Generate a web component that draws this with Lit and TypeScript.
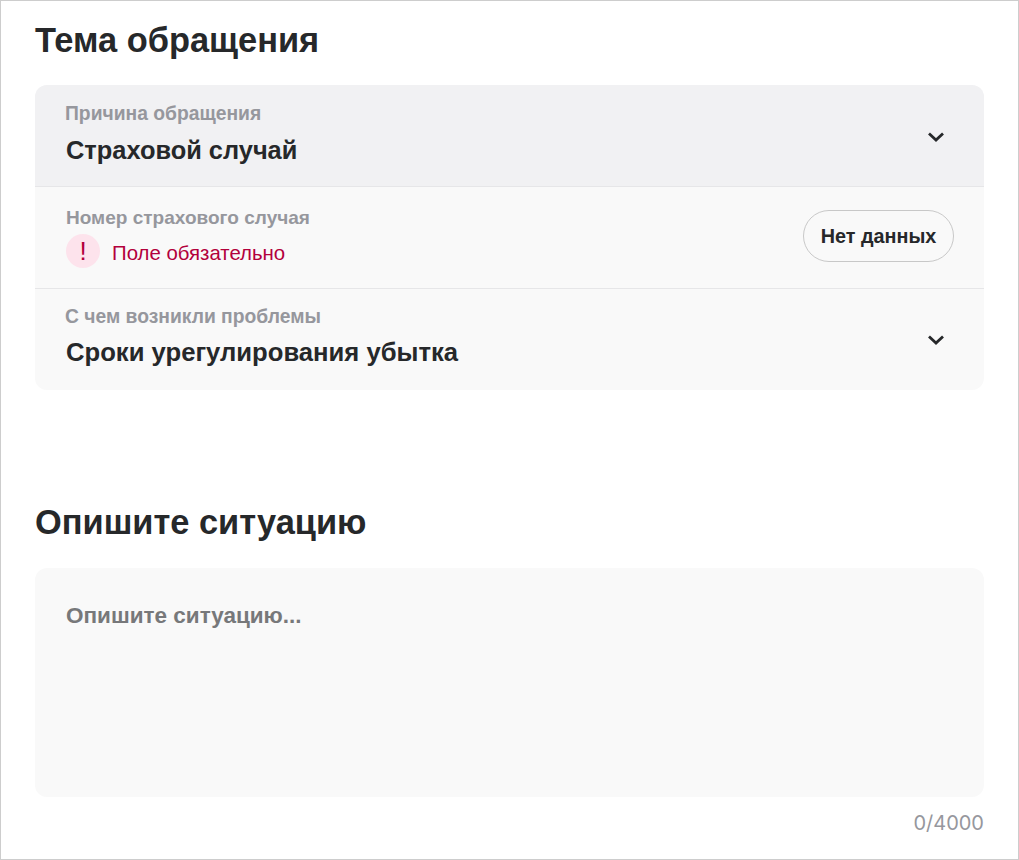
import { LitElement, html, css, svg } from "lit";
import { customElement } from "lit/decorators.js";

const chevron = svg`<svg class="chev" width="24" height="24" viewBox="0 0 24 24" fill="none"><path d="M5 8.5L12 15L19 8.5" stroke="#26282a" stroke-width="2.8"/></svg>`;

@customElement("app-root")
export class AppRoot extends LitElement {
  static styles = css`
    :host { display: block; width: 1019px; height: 860px; box-sizing: border-box; border: 1px solid #cdcdcd; background: #fff; font-family: "Liberation Sans", Arial, sans-serif; color: #26282a; overflow: hidden; padding: 0 34px; }
    h2 { margin: 0; font-size: 34.4px; line-height: 38px; font-weight: 700; }
    .h1 { padding-top: 20px; }
    .h2 { padding-top: 113px; }
    .card { margin-top: 26px; border-radius: 12px; overflow: hidden; background: #f9f9f9; }
    .row { display: flex; align-items: center; justify-content: space-between; padding: 0 30px; box-sizing: border-box; border-top: 1px solid #e6e6e8; }
    .row:first-child { border-top: 0; background: #f1f1f3; height: 101px; }
    .r2 { height: 102px; padding-left: 31px; }
    .r3 { height: 102px; }
    .text { display: flex; flex-direction: column; }
    .label { font-size: 19.3px; line-height: 22px; font-weight: 700; color: #96979d; }
    .r2 .label { font-size: 19.05px; }
    .value { font-size: 25.4px; line-height: 30px; font-weight: 700; margin: 10px 0 0 1px; }
    .r3 .value { font-size: 25.65px; margin-top: 9px; }
    .t1 { padding-bottom: 4px; }
    .t2 { padding-bottom: 0; }
    .t3 { padding-bottom: 6px; }
    .err { display: flex; align-items: center; gap: 12px; margin-top: 5px; font-size: 20.4px; color: #b3003c; }
    .bang { width: 34px; height: 34px; border-radius: 50%; background: #fde3ec; display: flex; align-items: center; justify-content: center; font-size: 26px; }
    .errtext { padding-top: 5px; }
    .btn { height: 52px; width: 151px; box-sizing: border-box; border: 1px solid #c8c8c8; border-radius: 26px; display: flex; align-items: center; justify-content: center; font-size: 19.8px; font-weight: 700; margin-bottom: 3px; }
    .chev { margin-right: 6px; }
    .row:first-child .chev { margin-top: 2px; }
    .area { margin-top: 27px; height: 229px; background: #f9f9f9; border-radius: 12px; padding: 35px 31px; box-sizing: border-box; font-size: 22.5px; line-height: 26px; font-weight: 700; color: #77787a; }
    .count { text-align: right; margin-top: 14px; font-family: "Inter", sans-serif; font-size: 20px; color: #96979d; }
  `;
  render() {
    return html`
      <div class="h1"><h2>Тема обращения</h2></div>
      <div class="card">
        <div class="row"><div class="text t1"><div class="label">Причина обращения</div><div class="value">Страховой случай</div></div>${chevron}</div>
        <div class="row r2"><div class="text t2"><div class="label">Номер страхового случая</div><div class="err"><span class="bang">!</span><span class="errtext">Поле обязательно</span></div></div><div class="btn">Нет данных</div></div>
        <div class="row r3"><div class="text t3"><div class="label">С чем возникли проблемы</div><div class="value">Сроки урегулирования убытка</div></div>${chevron}</div>
      </div>
      <div class="h2"><h2>Опишите ситуацию</h2></div>
      <div class="area">Опишите ситуацию...</div>
      <div class="count">0/4000</div>
    `;
  }
}
